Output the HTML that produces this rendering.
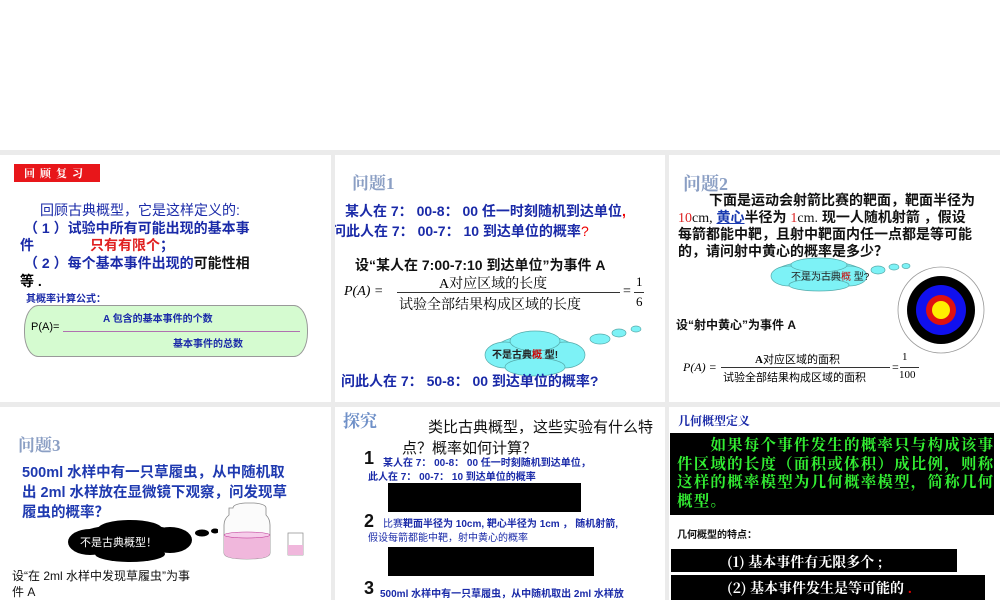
<!DOCTYPE html>
<html><head><meta charset="utf-8"><style>
*{margin:0;padding:0;box-sizing:border-box}
body{width:1000px;height:600px;background:#fff;position:relative;overflow:hidden;font-family:"Liberation Sans","Noto Sans CJK SC",sans-serif}
.g{position:absolute;background:#ebebeb}
.s{position:absolute;background:#fff;overflow:hidden}
.t{position:absolute;white-space:nowrap}
.b{font-weight:bold}
.blue{color:#1a2aa8}
.ti{color:#8b9fc4;font-family:"Liberation Serif","Noto Serif CJK SC",serif;font-weight:bold;font-size:17px}
.serif{font-family:"Liberation Serif","Noto Serif CJK SC",serif}
</style></head><body>
<div class="g" style="left:0;top:150px;width:1000px;height:450px"></div>

<!-- slide 1 -->
<div class="s" style="left:0;top:155px;width:331px;height:247px">
 <div class="t b" style="left:14px;top:9px;width:86px;height:18px;background:#e8161a;color:#fff;font-size:11px;line-height:18px;padding-left:10px;letter-spacing:5px;font-family:'Noto Serif CJK SC',serif">回顾复习</div>
 <div class="t blue" style="left:40px;top:45px;font-size:14px">回顾古典概型，它是这样定义的:</div>
 <div class="t blue b" style="left:24px;top:63px;font-size:14px">（ 1 ）试验中所有可能出现的基本事</div>
 <div class="t blue b" style="left:20px;top:80px;font-size:14px">件　　　　<span style="color:#e02020">只有有限个</span>；</div>
 <div class="t blue b" style="left:24px;top:98px;font-size:14px">（ 2 ）每个基本事件出现的<span style="color:#111">可能性相</span></div>
 <div class="t b" style="left:20px;top:116px;font-size:14px">等 .</div>
 <div class="t blue b" style="left:26px;top:135px;font-size:10px">其概率计算公式：</div>
 <div style="position:absolute;left:24px;top:150px;width:284px;height:52px;background:#d5fbd0;border:1px solid #999;border-radius:14px/24px"></div>
 <div class="t" style="left:31px;top:166px;font-size:11px">P(A)=</div>
 <div style="position:absolute;left:63px;top:176px;width:237px;height:1px;background:#b070b0"></div>
 <div class="t blue b" style="left:103px;top:155px;font-size:10px">A 包含的基本事件的个数</div>
 <div class="t blue b" style="left:173px;top:180px;font-size:10px">基本事件的总数</div>
</div>

<!-- slide 2 -->
<div class="s" style="left:335px;top:155px;width:330px;height:247px">
 <div class="t ti" style="left:17px;top:14px">问题1</div>
 <div class="t blue b" style="left:10px;top:46px;font-size:14px">某人在 7： 00-8： 00 任一时刻随机到达单位<span style="color:#e00">,</span></div>
 <div class="t blue b" style="left:-3px;top:66px;font-size:14px">问此人在 7： 00-7： 10 到达单位的概率<span style="color:#e00;font-weight:normal">?</span></div>
 <div class="t b" style="left:20px;top:100px;font-size:14px;color:#111">设“某人在 7:00-7:10 到达单位”为事件 A</div>
 <div class="t serif" style="left:9px;top:129px;font-size:14px;font-style:italic">P(A) =</div>
 <div class="t serif" style="left:104px;top:118px;font-size:14px">A对应区域的长度</div>
 <div style="position:absolute;left:62px;top:137px;width:223px;height:1px;background:#333"></div>
 <div class="t serif" style="left:64px;top:139px;font-size:14px">试验全部结果构成区域的长度</div>
 <div class="t serif" style="left:288px;top:129px;font-size:14px">=</div>
 <div class="t serif" style="left:301px;top:119px;font-size:13px">1</div>
 <div style="position:absolute;left:299px;top:137px;width:10px;height:1px;background:#333"></div>
 <div class="t serif" style="left:301px;top:139px;font-size:13px">6</div>
 <svg style="position:absolute;left:0;top:0" width="330" height="247">
  <g fill="#7df2f6" stroke="#5aa" stroke-width="0.7">
   <ellipse cx="200" cy="198" rx="42" ry="18"/>
   <ellipse cx="170" cy="200" rx="20" ry="13"/><ellipse cx="230" cy="200" rx="20" ry="13"/>
   <ellipse cx="200" cy="186" rx="25" ry="10"/><ellipse cx="200" cy="212" rx="30" ry="9"/>
   <ellipse cx="265" cy="184" rx="10" ry="5"/><ellipse cx="284" cy="178" rx="7" ry="4"/><ellipse cx="301" cy="174" rx="5" ry="3"/>
  </g>
 </svg>
 <div class="t b" style="left:157px;top:191px;font-size:10px;color:#222">不是古典<span style="color:#c00">概</span> 型!</div>
 <div class="t blue b" style="left:6px;top:216px;font-size:14px">问此人在 7： 50-8： 00 到达单位的概率?</div>
</div>

<!-- slide 3 -->
<div class="s" style="left:669px;top:155px;width:331px;height:247px">
 <div class="t ti" style="left:14px;top:15px;font-size:18px">问题2</div>
 <div class="t b" style="left:40px;top:35px;font-size:14px;color:#111">下面是运动会射箭比赛的靶面，靶面半径为</div>
 <div class="t b" style="left:9px;top:52px;font-size:14px;color:#111"><span class="serif" style="color:#d22;font-weight:normal">10</span><span class="serif" style="font-weight:normal">cm,</span> <span style="color:#1a3ab0;text-decoration:underline">黄心</span>半径为 <span class="serif" style="color:#d22;font-weight:normal">1</span><span class="serif" style="font-weight:normal">cm.</span> 现一人随机射箭 ，假设</div>
 <div class="t b" style="left:9px;top:69px;font-size:14px;color:#111">每箭都能中靶，且射中靶面内任一点都是等可能</div>
 <div class="t b" style="left:9px;top:86px;font-size:14px;color:#111">的，请问射中黄心的概率是多少？</div>
 <svg style="position:absolute;left:0;top:0" width="331" height="247">
  <g fill="#7df2f6" stroke="#5aa" stroke-width="0.7">
   <ellipse cx="150" cy="119" rx="45" ry="13"/><ellipse cx="120" cy="121" rx="18" ry="10"/><ellipse cx="180" cy="121" rx="18" ry="10"/>
   <ellipse cx="150" cy="110" rx="28" ry="7"/><ellipse cx="150" cy="130" rx="30" ry="6"/>
   <ellipse cx="209" cy="115" rx="7" ry="4"/><ellipse cx="225" cy="112" rx="5" ry="3"/><ellipse cx="237" cy="111" rx="4" ry="2.5"/>
  </g>
  <circle cx="272" cy="155" r="43" fill="#fff" stroke="#999" stroke-width="0.8"/>
  <circle cx="272" cy="155" r="34" fill="#000"/>
  <circle cx="272" cy="155" r="25" fill="#1010ee"/>
  <circle cx="272" cy="155" r="15" fill="#e01010"/>
  <circle cx="272" cy="155" r="9" fill="#ffee00"/>
 </svg>
 <div class="t" style="left:122px;top:113px;font-size:10px;color:#222">不是为古典<span style="color:#c00">概</span> 型?</div>
 <div class="t b" style="left:7px;top:161px;font-size:12px;color:#111">设“射中黄心”为事件 A</div>
 <div class="t serif" style="left:14px;top:205px;font-size:12px;font-style:italic">P(A) =</div>
 <div class="t" style="left:86px;top:196px;font-size:11px"><b class="serif">A</b>对应区域的面积</div>
 <div style="position:absolute;left:52px;top:212px;width:169px;height:1px;background:#333"></div>
 <div class="t" style="left:54px;top:214px;font-size:11px">试验全部结果构成区域的面积</div>
 <div class="t serif" style="left:223px;top:205px;font-size:12px">=</div>
 <div class="t serif" style="left:233px;top:196px;font-size:11px">1</div>
 <div style="position:absolute;left:231px;top:212px;width:19px;height:1px;background:#333"></div>
 <div class="t serif" style="left:230px;top:214px;font-size:11px">100</div>
</div>

<!-- slide 4 -->
<div class="s" style="left:0;top:407px;width:331px;height:193px">
 <div class="t ti" style="left:18px;top:24px;font-size:17px">问题3</div>
 <div class="t b" style="left:22px;top:56px;font-size:14.5px;color:#1f3ab0;line-height:20px">500ml 水样中有一只草履虫，从中随机取<br>出 2ml 水样放在显微镜下观察，问发现草<br>履虫的概率？</div>
 <svg style="position:absolute;left:0;top:0" width="331" height="193">
  <g fill="#000">
   <ellipse cx="130" cy="133" rx="55" ry="16"/><ellipse cx="90" cy="135" rx="22" ry="13"/><ellipse cx="170" cy="133" rx="22" ry="13"/>
   <ellipse cx="130" cy="122" rx="32" ry="9"/><ellipse cx="130" cy="147" rx="35" ry="8"/>
   <ellipse cx="202" cy="126" rx="7" ry="3.5"/><ellipse cx="215" cy="124" rx="4" ry="2.5"/>
  </g>
  <rect x="218" y="95" width="90" height="59" fill="#fff"/>
  <path d="M233 101 Q233 97 245 96 L254 96 Q266 97 266 101 L266 108 Q270 112 270 118 L270 146 Q270 152 247 152 Q224 152 224 146 L224 118 Q224 112 229 108 L229 101 Z" fill="#fbfbfb" stroke="#888" stroke-width="0.8"/>
  <path d="M224 128 Q247 123 270 128 L270 146 Q270 152 247 152 Q224 152 224 146 Z" fill="#f0b7dc"/>
  <ellipse cx="247" cy="128" rx="23" ry="3" fill="#f6cdea" stroke="#a07" stroke-width="0.4"/>
  <rect x="288" y="126" width="15" height="22" fill="#fff" stroke="#888" stroke-width="0.7"/>
  <rect x="288" y="138" width="15" height="10" fill="#f0b7dc"/>
 </svg>
 <div class="t" style="left:80px;top:127px;font-size:11px;color:#fff">不是古典概型！</div>
 <div class="t" style="left:12px;top:161px;font-size:12px;color:#111;line-height:16px">设“在 2ml 水样中发现草履虫”为事<br>件 A</div>
</div>

<!-- slide 5 -->
<div class="s" style="left:335px;top:407px;width:330px;height:193px">
 <div class="t ti" style="left:8px;top:0px;font-size:17px;color:#6f90c8">探究</div>
 <div class="t" style="left:93px;top:9px;font-size:15px;color:#111">类比古典概型，这些实验有什么特</div>
 <div class="t" style="left:67px;top:30px;font-size:15px;color:#111">点？概率如何计算？</div>
 <div class="t b" style="left:29px;top:41px;font-size:18px;color:#111">1</div>
 <div class="t b blue" style="left:48px;top:47px;font-size:10px">某人在 7： 00-8： 00 任一时刻随机到达单位，</div>
 <div class="t b blue" style="left:33px;top:61px;font-size:10px">此人在 7： 00-7： 10 到达单位的概率</div>
 <div style="position:absolute;left:53px;top:76px;width:193px;height:29px;background:#000"></div>
 <div class="t b" style="left:29px;top:104px;font-size:18px;color:#111">2</div>
 <div class="t blue" style="left:48px;top:108px;font-size:10px">比赛<b>靶面半径为 10cm, 靶心半径为 1cm ， 随机射箭,</b></div>
 <div class="t blue" style="left:33px;top:122px;font-size:10px">假设每箭都能中靶，射中黄心的概率</div>
 <div style="position:absolute;left:53px;top:140px;width:206px;height:29px;background:#000"></div>
 <div class="t b" style="left:29px;top:171px;font-size:18px;color:#111">3</div>
 <div class="t b blue" style="left:45px;top:178px;font-size:10px">500ml 水样中有一只草履虫，从中随机取出 2ml 水样放</div>
</div>

<!-- slide 6 -->
<div class="s" style="left:669px;top:407px;width:331px;height:193px">
 <div class="t b" style="left:9px;top:5px;font-size:12px;color:#1a2aa8;font-family:'Noto Serif CJK SC',serif">几何概型定义</div>
 <div style="position:absolute;left:1px;top:26px;width:324px;height:82px;background:#000"></div>
 <div class="t b" style="left:8px;top:28px;font-size:15.5px;color:#33ee33;line-height:18.5px;font-family:'Noto Serif CJK SC',serif;letter-spacing:1.2px">　　如果每个事件发生的概率只与构成该事<br>件区域的长度（面积或体积）成比例，则称<br>这样的概率模型为几何概率模型，简称几何<br>概型。</div>
 <div class="t b" style="left:8px;top:119px;font-size:10px;color:#111">几何概型的特点：</div>
 <div style="position:absolute;left:2px;top:142px;width:286px;height:23px;background:#000"></div>
 <div class="t b" style="left:58px;top:145px;font-size:14px;color:#fff;font-family:'Noto Serif CJK SC',serif">(1) 基本事件有无限多个 ;</div>
 <div style="position:absolute;left:2px;top:168px;width:314px;height:25px;background:#000"></div>
 <div class="t b" style="left:58px;top:171px;font-size:14px;color:#fff;font-family:'Noto Serif CJK SC',serif">(2) 基本事件发生是等可能的 <span style="color:#e00">.</span></div>
</div>
</body></html>
